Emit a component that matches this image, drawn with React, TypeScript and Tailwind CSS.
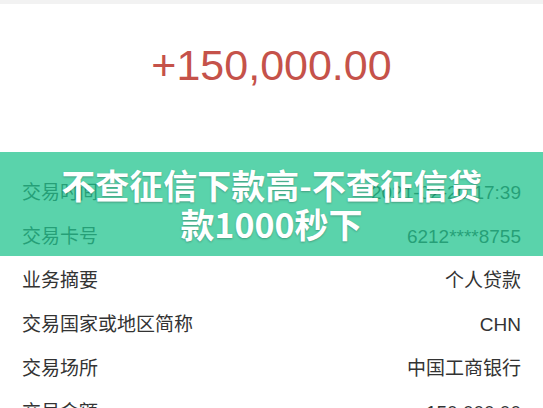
import React from "react";

const rows: [string, string][] = [
  ["交易时间", "2021-02-20 17:39"],
  ["交易卡号", "6212****8755"],
  ["业务摘要", "个人贷款"],
  ["交易国家或地区简称", "CHN"],
  ["交易场所", "中国工商银行"],
  ["交易金额", "150,000.00"],
];

export default function App() {
  return (
    <div
      className="relative w-[543px] h-[408px] overflow-hidden bg-white"
      style={{ fontFamily: '"Liberation Sans", "Noto Sans CJK SC", sans-serif' }}
    >
      <div className="h-1 bg-[#f2f2f2]" />
      <div className="h-[167px] pt-[40px] flex justify-center">
        <div className="text-[43px] leading-none text-[#c5524a] h-[43px]">+150,000.00</div>
      </div>
      <div className="flex flex-col">
        {rows.map(([k, v]) => (
          <div
            key={k}
            className="h-[44px] flex items-center justify-between px-[22px] text-[19px] text-[#333333]"
          >
            <span>{k}</span>
            <span>{v}</span>
          </div>
        ))}
      </div>
      <div className="absolute left-0 right-0 top-[152px] h-[104px] bg-[rgba(35,196,143,0.75)] flex items-center justify-center">
        <div
          className="text-center text-white font-bold text-[34px] leading-[39px] [text-shadow:0_1px_2px_rgba(0,0,0,0.25)]"
          style={{ fontFamily: '"Noto Sans CJK SC", "Liberation Sans", sans-serif' }}
        >
          不查征信下款高-不查征信贷
          <br />
          款1000秒下
        </div>
      </div>
    </div>
  );
}
